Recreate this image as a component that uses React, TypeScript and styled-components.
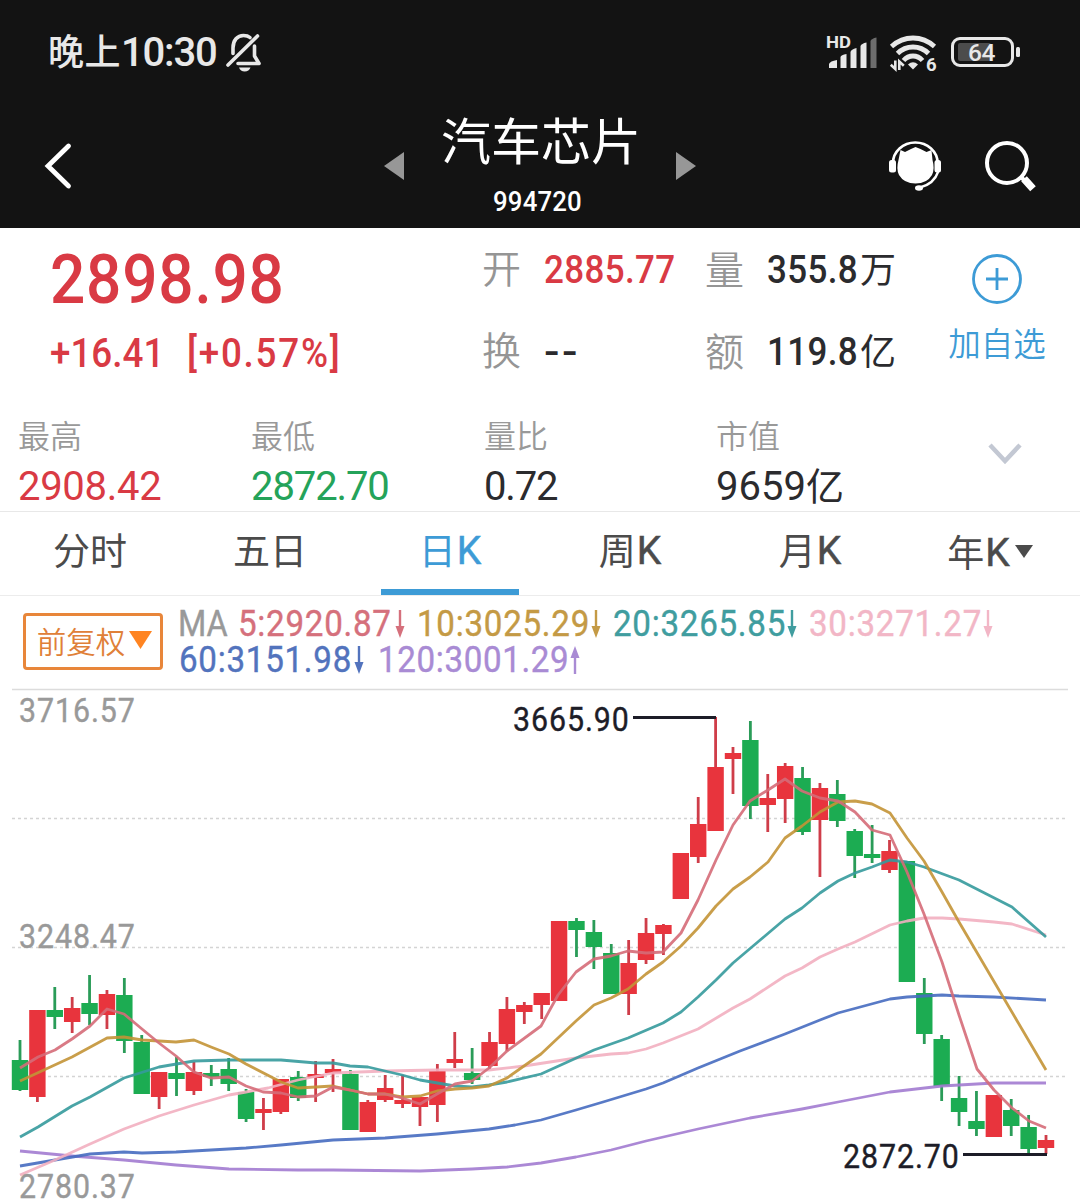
import React from "react";
import styled, { createGlobalStyle } from "styled-components";

const RED = "#d93a44";
const GREEN = "#24a35a";
const BLUE = "#3d9bd6";
const INK = "#2b2b2e";
const GREY = "#999999";

const GlobalStyle = createGlobalStyle`
  * { box-sizing: border-box; }
  body {
    margin: 0;
    background: #fff;
    font-family: Roboto, "Noto Sans CJK SC", sans-serif;
  }
`;

const Screen = styled.main`
  width: 1080px;
  height: 1203px;
  display: flex;
  flex-direction: column;
  overflow: hidden;
  background: #fff;
  white-space: nowrap;
`;

// Condensed numerals: glyphs are narrowed and tracked out inside a fixed advance.
const Din = styled.span<{ $w: number; $track?: number; $scale?: number }>`
  display: inline-block;
  width: ${(p) => p.$w}px;
  letter-spacing: ${(p) => p.$track ?? 0}px;
  transform: scaleX(${(p) => p.$scale ?? 0.92});
  transform-origin: left;
`;

const Top = styled.header`
  height: 228px;
  background: #131313;
  color: #fff;
`;

const StatusBar = styled.div`
  height: 104px;
  padding: 0 60px 0 48px;
  display: flex;
  align-items: center;
  color: #e8e8e8;
`;

const Clock = styled.div`
  display: flex;
  align-items: center;
  padding-top: 2px;
  line-height: 50px;
  font-weight: 500;
`;

const Daypart = styled.span`
  font-size: 36px;
  letter-spacing: 0.5px;
`;

const Time = styled.span`
  font-size: 40px;
  letter-spacing: -1.2px;
`;

const Bell = styled.svg`
  margin-left: 8px;
`;

const StatusIcons = styled.div`
  margin-left: auto;
  display: flex;
`;

const TitleBar = styled.div`
  height: 124px;
  display: grid;
  grid-template-columns: 380px 320px 380px;
`;

const BackArea = styled.div`
  padding: 38px 0 0 42px;
`;

const TitleArea = styled.div`
  display: flex;
  justify-content: space-between;
  padding: 0 4px;
`;

const Arrow = styled.svg`
  margin-top: 48px;
`;

const Names = styled.div`
  display: flex;
  flex-direction: column;
  align-items: center;
`;

const Title = styled.h1`
  margin: 8px 0 0 2px;
  font-size: 50px;
  font-weight: 400;
  line-height: 62px;
`;

const Code = styled.div`
  margin: 12px 5px 0 0;
  font-size: 28px;
  font-weight: 500;
  line-height: 32px;
`;

const Actions = styled.div`
  display: flex;
  justify-content: flex-end;
  gap: 40px;
  padding: 34px 42px 0 0;
`;

const Quote = styled.section`
  height: 283px;
`;

const QuoteMain = styled.div`
  height: 178px;
  padding-top: 17px;
  display: grid;
  grid-template-columns: 482px 223px 207px 168px;
`;

const PriceColumn = styled.div`
  padding-left: 50px;
  color: ${RED};
`;

const Price = styled.div`
  font-size: 69px;
  font-weight: 500;
  line-height: 70px;
`;

const Change = styled.div`
  display: flex;
  margin-top: 15px;
  font-size: 40px;
  font-weight: 500;
  line-height: 48px;
`;

const Pairs = styled.div`
  display: grid;
  grid-template-rows: 50px 50px;
  row-gap: 32px;
`;

const Pair = styled.div`
  display: grid;
  grid-template-columns: 62px 1fr;
  align-items: center;
  line-height: 50px;
`;

const PairLabel = styled.span`
  font-size: 39px;
  font-weight: 350;
  color: #959595;
`;

const PairValue = styled.span<{ $color?: string }>`
  font-size: 38px;
  font-weight: 500;
  color: ${(p) => p.$color ?? INK};
`;

const Unit = styled.span<{ $size: number }>`
  font-size: ${(p) => p.$size}px;
  font-weight: 400;
`;

const AddWatch = styled.div`
  display: flex;
  flex-direction: column;
  align-items: center;
  padding: 7px 0 0 2px;
  color: ${BLUE};
`;

const AddLabel = styled.span`
  margin-top: 19px;
  font-size: 32.5px;
  font-weight: 350;
  line-height: 40px;
`;

const Stats = styled.div`
  height: 105px;
  padding-left: 18px;
  display: grid;
  grid-template-columns: 233px 233px 232px 214px 1fr;
`;

const Stat = styled.div`
  padding-top: 11px;
  display: flex;
  flex-direction: column;
`;

const StatLabel = styled.span`
  font-size: 32px;
  font-weight: 350;
  line-height: 40px;
  color: ${GREY};
`;

const StatValue = styled.span<{ $color?: string; $track?: number }>`
  margin-top: 5px;
  font-size: 40px;
  line-height: 50px;
  letter-spacing: ${(p) => p.$track ?? 0}px;
  color: ${(p) => p.$color ?? INK};
`;

const Expand = styled.svg`
  margin: 36px 0 0 56px;
`;

const Tabs = styled.nav`
  height: 85px;
  display: grid;
  grid-template-columns: repeat(6, 1fr);
  border-top: 1px solid #e8e8e8;
  border-bottom: 1px solid #ececec;
`;

const Tab = styled.div<{ $active?: boolean; $raise?: number }>`
  display: flex;
  align-items: center;
  justify-content: center;
  width: ${(p) => (p.$active ? "138px" : "auto")};
  margin: 0 auto;
  padding-bottom: ${(p) => p.$raise ?? 9}px;
  border-bottom: ${(p) => (p.$active ? "6px" : "0")} solid ${BLUE};
  font-size: 37px;
  color: ${(p) => (p.$active ? BLUE : "#4b4b4b")};
`;

const Latin = styled.span`
  padding: 3px 0 0 1px;
  font-size: 39px;
  -webkit-text-stroke: 0.5px currentColor;
`;

const MoreMark = styled.svg`
  margin-left: 5px;
`;

const Legend = styled.section`
  height: 92px;
  padding: 10px 0 0 23px;
  display: flex;
  align-items: flex-start;
`;

const Adjust = styled.div`
  width: 140px;
  height: 57px;
  margin-top: 7px;
  padding: 0 0 3px 3px;
  border: 3px solid #e8863a;
  border-radius: 4px;
  display: flex;
  align-items: center;
  justify-content: center;
  gap: 4px;
  font-size: 29.5px;
  font-weight: 350;
  color: #e08038;
`;

const Averages = styled.div`
  margin-left: 15px;
  font-size: 36px;
  line-height: 36px;
  -webkit-text-stroke: 0.4px currentColor;
`;

const AverageRow = styled.div<{ $gap: number; $indent?: number }>`
  display: flex;
  align-items: center;
  height: 36px;
  padding-left: ${(p) => p.$indent ?? 0}px;
  gap: ${(p) => p.$gap}px;
`;

const Average = styled.span<{ $color: string }>`
  display: flex;
  align-items: center;
  gap: 2px;
  color: ${(p) => p.$color};
`;

const ChartLabel = styled.text<{ $color: string }>`
  font-size: 33px;
  fill: ${(p) => p.$color};
  stroke: ${(p) => p.$color};
  stroke-width: 0.4px;
`;

const Plot = styled.svg`
  display: block;
`;

const Trend = ({ up }: { up?: boolean }) => (
  <svg width="10" height="28" viewBox="0 0 10 28">
    <g transform={up ? "rotate(180 5 14)" : undefined}>
      <path d="M5 0V18" stroke="currentColor" strokeWidth="2.400" />
      <path d="M0.500 16H9.500L5 28Z" fill="currentColor" />
    </g>
  </svg>
);

const MutedBell = () => (
  <Bell width="38" height="42" viewBox="0 0 38 42">
    <g fill="none" stroke="#e8e8e8" strokeWidth="3.600" strokeLinecap="round" strokeLinejoin="round">
      <path d="M8 21.500V16C8 8 12.500 3.500 18.500 3.500C21 3.500 23.500 4.200 25 5.500" />
      <path d="M29.500 14V24L34 31.500H13" />
      <path d="M32.500 4L3 33" />
    </g>
    <path d="M14 35.500H25.500Q24 39.500 19.700 39.500T14 35.500Z" fill="#e8e8e8" />
  </Bell>
);

const Signals = () => (
  <svg width="196" height="44" viewBox="824 30 196 44" fill="#e8e8e8">
    <text x="826" y="48" fontSize="16.500" fontWeight="700" textLength="25" lengthAdjust="spacingAndGlyphs">HD</text>
    <path d="M829 68V64Q830 61 837 60V68Z" />
    <path d="M840.500 68V57Q841 55 846.500 54V68Z" />
    <path d="M850.500 68V52Q851 49.500 856.500 48V68Z" />
    <path d="M860.500 68V46Q861.500 43.500 866.500 42.500V68Z" />
    <path d="M870.500 68V41Q871.500 38.500 876.500 37.500V68Z" fill="#6d6d6d" />
    <g fill="none" stroke="#e8e8e8" strokeWidth="4.800">
      <path d="M891.500 46.500Q901 38 913 38T934.500 46.500" />
      <path d="M897.500 53.500Q904 47 913 47T928.500 53.500" />
      <path d="M903.500 60.500Q907.500 56 913 56T922.500 60.500" />
    </g>
    <path d="M908 64.500Q913 60 918 64.500L913 69.500Z" />
    <path d="M895.300 60.500V69L890.800 64.800M899.300 70V61.500L903.800 65.700" fill="none" stroke="#e8e8e8" strokeWidth="2.600" />
    <text x="926" y="70.500" fontSize="18.500" fontWeight="700">6</text>
    <rect x="952.500" y="38.500" width="60" height="27" rx="7.500" fill="none" stroke="#e8e8e8" strokeWidth="3" />
    <rect x="958" y="43" width="33" height="18" rx="2" fill="#4c4c4c" />
    <rect x="1016" y="47" width="4" height="10" rx="1.500" />
    <text x="968" y="61" fontSize="24.500" fontWeight="500" letterSpacing="-0.500">64</text>
  </svg>
);

const ServiceIcon = () => (
  <svg width="54" height="54" viewBox="888 138 54 54" fill="#fff">
    <path d="M893 163A22.300 20.500 0 0 1 937.600 163" fill="none" stroke="#fff" strokeWidth="2.600" />
    <path d="M938.500 171Q934 184 920 187.500" fill="none" stroke="#fff" strokeWidth="2.400" />
    <rect x="889" y="160" width="7" height="12.500" rx="2.500" />
    <rect x="934.500" y="160" width="6.500" height="12.500" rx="2.500" />
    <path d="M900.500 150L905 152L911 149L915.500 147L920.500 149L926.500 152L931.500 150L932.500 160Q935 169 932 175Q927 183.500 915.500 183.500T899 175Q896 169 898.500 160Z" />
    <ellipse cx="919" cy="188" rx="4" ry="2.800" />
  </svg>
);

const SearchIcon = () => (
  <svg width="56" height="56" viewBox="982 138 56 56" fill="none" stroke="#fff">
    <circle cx="1007" cy="163" r="20" strokeWidth="4" />
    <path d="M1021 177L1025 181" strokeWidth="4" />
    <path d="M1026.500 181.500L1030.500 186" strokeWidth="7.500" strokeLinecap="square" strokeLinejoin="round" />
  </svg>
);

// One entry per session: [up, body top, body bottom, wick top, wick bottom].
type Candle = [number, number, number, number, number];
const CANDLES: Candle[] = [
  [0, 1060, 1090, 1040, 1091], [1, 1010, 1097, 1010, 1102], [0, 1010, 1017, 987, 1029],
  [1, 1008, 1022, 997, 1033], [0, 1003, 1014, 975, 1025], [1, 994, 1015, 990, 1029],
  [0, 995, 1041, 978, 1053], [0, 1042, 1094, 1035, 1094], [1, 1072, 1097, 1072, 1109],
  [0, 1073, 1079, 1057, 1096], [1, 1072, 1091, 1062, 1095], [0, 1073, 1077, 1065, 1086],
  [0, 1069, 1084, 1058, 1091], [0, 1092, 1119, 1089, 1122], [1, 1109, 1113, 1098, 1130],
  [1, 1079, 1112, 1079, 1114], [0, 1077, 1098, 1071, 1101], [1, 1074, 1078, 1061, 1102],
  [1, 1069, 1073, 1059, 1092], [0, 1074, 1130, 1070, 1130], [1, 1102, 1132, 1100, 1132],
  [1, 1088, 1100, 1075, 1102], [1, 1100, 1104, 1075, 1108], [1, 1097, 1107, 1097, 1126],
  [1, 1071, 1105, 1064, 1122], [1, 1059, 1063, 1032, 1068], [0, 1073, 1080, 1048, 1084],
  [1, 1042, 1066, 1032, 1069], [1, 1009, 1044, 997, 1051], [1, 1005, 1012, 1002, 1024],
  [1, 993, 1005, 993, 1019], [1, 921, 1001, 921, 1001], [0, 921, 930, 918, 957],
  [0, 932, 947, 920, 969], [0, 953, 994, 944, 994], [1, 963, 994, 940, 1015],
  [1, 933, 960, 918, 964], [1, 925, 934, 924, 955], [1, 853, 899, 853, 899],
  [1, 824, 857, 797, 863], [1, 767, 831, 717, 831], [1, 753, 759, 747, 794],
  [0, 740, 806, 721, 819], [1, 798, 805, 774, 832], [1, 766, 799, 763, 823],
  [0, 778, 832, 767, 835], [1, 788, 820, 783, 877], [0, 794, 821, 780, 827],
  [0, 831, 856, 829, 878], [0, 854, 858, 825, 863], [1, 851, 870, 840, 873],
  [0, 861, 982, 861, 982], [0, 993, 1034, 978, 1044], [0, 1039, 1086, 1035, 1101],
  [0, 1098, 1112, 1076, 1126], [0, 1121, 1129, 1091, 1136], [1, 1095, 1137, 1095, 1137],
  [0, 1110, 1126, 1099, 1136], [0, 1127, 1149, 1115, 1154], [1, 1140, 1148, 1135, 1154],
];
const candleX = (i: number) => 20 + i * 17.39;

const LINES = [
  { color: "#a27bd0", points: "20,1151 72,1156 124,1160 176,1165 229,1169 298,1170 333,1170 420,1171 472,1169 507,1167 541,1163 576,1157 611,1150 646,1141 698,1129 750,1118 802,1109 838,1102 890,1092 942,1086 994,1083 1046,1083" },
  { color: "#466cc0", points: "20,1166 55,1160 90,1154 124,1152 142,1153 176,1152 211,1150 246,1148 281,1145 333,1140 385,1138 437,1134 489,1129 515,1125 541,1120 576,1110 603,1102 646,1089 663,1083 698,1068 740,1051 785,1034 820,1020 838,1013 890,999 907,997 942,995 959,996 994,997 1046,1000" },
  { color: "#f2afc0", points: "20,1175 55,1160 90,1144 124,1129 159,1116 194,1105 229,1095 246,1092 268,1088 298,1080 333,1073 385,1071 437,1070 489,1070 524,1066 576,1058 611,1054 628,1053 646,1049 663,1043 698,1029 733,1008 750,999 785,976 802,968 820,957 838,949 855,942 890,925 907,921 924,918 942,918 959,919 994,922 1012,924 1046,935" },
  { color: "#359a9c", points: "20,1137 38,1127 72,1106 90,1097 124,1078 159,1067 194,1061 229,1060 281,1060 316,1063 333,1063 350,1066 368,1067 402,1075 420,1080 455,1086 472,1087 489,1085 507,1082 541,1074 594,1050 628,1038 663,1023 681,1012 698,997 716,980 733,963 785,919 802,908 820,893 838,881 855,873 872,867 890,860 907,862 924,867 959,880 1012,907 1046,937" },
  { color: "#c39336", points: "20,1081 72,1057 107,1038 124,1037 142,1040 176,1042 194,1040 211,1047 229,1054 246,1064 281,1082 298,1088 316,1087 333,1086 350,1090 368,1094 385,1094 402,1097 420,1096 437,1091 455,1089 472,1088 489,1086 507,1078 541,1054 576,1021 594,1005 611,998 628,989 646,974 663,962 681,946 698,928 716,906 733,889 750,877 768,862 785,838 802,826 820,812 838,802 855,801 872,804 890,813 907,838 924,861 942,892 959,922 1046,1070" },
  { color: "#d56b78", points: "20,1068 38,1057 55,1050 72,1039 90,1026 107,1009 124,1014 142,1029 159,1043 176,1056 194,1072 211,1078 229,1077 246,1086 263,1092 281,1093 298,1097 316,1096 333,1087 350,1090 368,1094 385,1094 402,1098 420,1104 437,1094 455,1084 472,1081 489,1068 507,1051 541,1026 558,995 576,972 594,959 611,956 628,951 646,953 663,952 681,933 698,900 716,860 733,825 750,801 768,790 785,779 802,791 820,798 838,801 855,812 872,830 890,835 907,872 924,914 942,962 959,1015 977,1069 994,1090 1012,1108 1029,1121 1046,1128" },
];

const LABELS = [
  { x: 19, y: 722, color: "#999", text: "3716.57" },
  { x: 19, y: 947.5, color: "#999", text: "3248.47" },
  { x: 19, y: 1197.5, color: "#999", text: "2780.37" },
  { x: 513, y: 731, color: "#1d1d28", text: "3665.90" },
  { x: 843, y: 1168, color: "#1d1d28", text: "2872.70" },
];

const Chart = () => (
  <Plot width="1080" height="515" viewBox="0 688 1080 515">
    <path d="M12 689.500H1068" stroke="#dcdcdc" strokeWidth="1.600" />
    {[818, 947, 1076].map((y) => (
      <path key={y} d={`M12 ${y}.500H1066`} stroke="#d4d4d4" strokeWidth="1.500" strokeDasharray="3 3" />
    ))}
    {CANDLES.map(([up, top, bottom, high, low], i) => (
      <g key={i}>
        <rect x={candleX(i) - 1.4} y={high} width="2.800" height={low - high} fill={up ? "#cf3d49" : "#2a9c58"} />
        <rect x={candleX(i) - 8.2} y={top} width="16.400" height={bottom - top} fill={up ? "#e8343d" : "#1cac52"} />
      </g>
    ))}
    {LINES.map((l) => (
      <polyline key={l.color} points={l.points} fill="none" stroke={l.color} strokeWidth="2.800" strokeLinejoin="round" strokeOpacity="0.900" />
    ))}
    <path d="M633 717.500H716M963 1154.500H1047" stroke="#1d1d28" strokeWidth="2.800" />
    {LABELS.map((l) => (
      <ChartLabel key={l.text} $color={l.color} transform={`translate(${l.x} ${l.y}) scale(0.92 1)`} textLength="126">
        {l.text}
      </ChartLabel>
    ))}
  </Plot>
);

export default function App() {
  return (
    <>
      <GlobalStyle />
      <Screen>
        <Top>
          <StatusBar>
            <Clock>
              <Daypart>晚上</Daypart>
              <Time>10:30</Time>
              <MutedBell />
            </Clock>
            <StatusIcons><Signals /></StatusIcons>
          </StatusBar>
          <TitleBar>
            <BackArea>
              <svg width="32" height="48" viewBox="0 0 32 48">
                <path d="M26.500 4L6 24L26.500 44" fill="none" stroke="#fff" strokeWidth="4.800" strokeLinecap="round" />
              </svg>
            </BackArea>
            <TitleArea>
              <Arrow width="20" height="28"><path d="M20 0V28L0 14Z" fill="#979797" /></Arrow>
              <Names>
                <Title>汽车芯片</Title>
                <Code><Din $w={90} $track={0.2}>994720</Din></Code>
              </Names>
              <Arrow width="20" height="28"><path d="M0 0V28L20 14Z" fill="#979797" /></Arrow>
            </TitleArea>
            <Actions>
              <ServiceIcon />
              <SearchIcon />
            </Actions>
          </TitleBar>
        </Top>

        <Quote>
          <QuoteMain>
            <PriceColumn>
              <Price><Din $w={236} $track={0.9} $scale={0.9}>2898.98</Din></Price>
              <Change>
                <Din $w={137} $track={0}>+16.41</Din>
                <Din $w={156} $track={1.9}>[+0.57%]</Din>
              </Change>
            </PriceColumn>
            <Pairs>
              <Pair><PairLabel>开</PairLabel><PairValue $color={RED}><Din $w={132} $track={0.4}>2885.77</Din></PairValue></Pair>
              <Pair><PairLabel>换</PairLabel><PairValue><Din $w={32} $track={2} $scale={1.2}>--</Din></PairValue></Pair>
            </Pairs>
            <Pairs>
              <Pair><PairLabel>量</PairLabel><PairValue><Din $w={93} $track={0.4}>355.8</Din><Unit $size={36}>万</Unit></PairValue></Pair>
              <Pair><PairLabel>额</PairLabel><PairValue><Din $w={93} $track={0.4}>119.8</Din><Unit $size={36}>亿</Unit></PairValue></Pair>
            </Pairs>
            <AddWatch>
              <svg width="54" height="54" viewBox="0 0 54 54" fill="none" stroke={BLUE} strokeWidth="2.800">
                <circle cx="27" cy="27" r="23.500" />
                <path d="M16 27H38M27 16V38" />
              </svg>
              <AddLabel>加自选</AddLabel>
            </AddWatch>
          </QuoteMain>
          <Stats>
            <Stat><StatLabel>最高</StatLabel><StatValue $color={RED} $track={-0.3}>2908.42</StatValue></Stat>
            <Stat><StatLabel>最低</StatLabel><StatValue $color={GREEN} $track={-1.1}>2872.70</StatValue></Stat>
            <Stat><StatLabel>量比</StatLabel><StatValue $track={-1.2}>0.72</StatValue></Stat>
            <Stat><StatLabel>市值</StatLabel><StatValue>9659<Unit $size={38}>亿</Unit></StatValue></Stat>
            <Expand width="38" height="24"><path d="M4 3L19 19L34 3" fill="none" stroke="#c3c8d3" strokeWidth="4.500" /></Expand>
          </Stats>
        </Quote>

        <Tabs>
          <Tab>分时</Tab>
          <Tab>五日</Tab>
          <Tab $active $raise={3}>日<Latin>K</Latin></Tab>
          <Tab>周<Latin>K</Latin></Tab>
          <Tab>月<Latin>K</Latin></Tab>
          <Tab $raise={5}>
            年<Latin>K</Latin>
            <MoreMark width="18" height="13"><path d="M0 0H18L9 13Z" fill="#4b4b4b" /></MoreMark>
          </Tab>
        </Tabs>

        <Legend>
          <Adjust>
            前复权
            <svg width="23" height="18"><path d="M0 0H23L11.500 18Z" fill="#ff8421" /></svg>
          </Adjust>
          <Averages>
            <AverageRow $gap={12}>
              <Average $color={GREY}><Din $w={48} $scale={0.9}>MA</Din></Average>
              <Average $color="#d5707c"><Din $w={155} $track={0.8}>5:2920.87</Din><Trend /></Average>
              <Average $color="#c49a45"><Din $w={172} $track={0.8}>10:3025.29</Din><Trend /></Average>
              <Average $color="#409d9f"><Din $w={172} $track={0.8}>20:3265.85</Din><Trend /></Average>
              <Average $color="#f2b6c6"><Din $w={172} $track={0.8}>30:3271.27</Din><Trend /></Average>
            </AverageRow>
            <AverageRow $gap={14} $indent={1}>
              <Average $color="#5273bd"><Din $w={173} $track={0.8}>60:3151.98</Din><Trend /></Average>
              <Average $color="#a98bd4"><Din $w={190} $track={0.7}>120:3001.29</Din><Trend up /></Average>
            </AverageRow>
          </Averages>
        </Legend>
        <Chart />
      </Screen>
    </>
  );
}
